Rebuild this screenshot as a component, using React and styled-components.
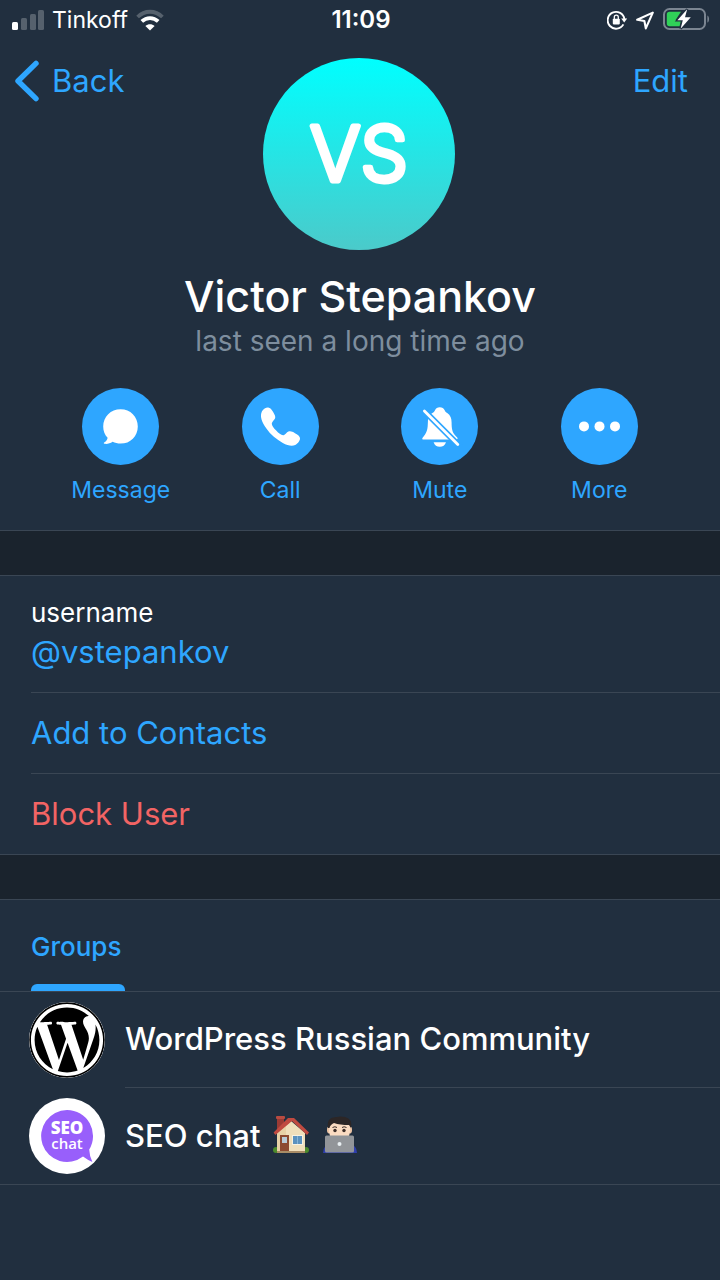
import React from 'react';
import styled, { createGlobalStyle } from 'styled-components';
import { FaWordpress } from 'react-icons/fa';

const GlobalStyle = createGlobalStyle`
  * {
    box-sizing: border-box;
  }

  body {
    margin: 0;
    background-color: #212f3f;
    font-family: Inter, "Liberation Sans", sans-serif;
    color: #fff;
  }

  button {
    font-family: inherit;
    background: none;
    border: none;
    padding: 0;
    cursor: pointer;
  }

  a {
    color: inherit;
    text-decoration: none;
  }

  svg {
    display: block;
    flex: none;
  }
`;

const Page = styled.div`
  min-height: 100vh;
  background-color: #212f3f;
`;

const StatusBar = styled.div`
  display: grid;
  grid-template-columns: 1fr auto 1fr;
  align-items: center;
  height: 40px;
  padding: 0 10px 0 12px;
  font-size: 23px;
  line-height: 28px;
`;

const StatusGroup = styled.div`
  display: flex;
  align-items: center;
  justify-content: ${(props) => (props.$end ? 'flex-end' : 'flex-start')};
  gap: ${(props) => (props.$end ? '9px' : '8px')};
`;

const Clock = styled.time`
  font-size: 24px;
  font-weight: 600;
`;

const Header = styled.header`
  border-bottom: 1px solid #3a4654;
  padding-bottom: 25px;
`;

const NavBar = styled.nav`
  display: grid;
  grid-template-columns: 1fr auto 1fr;
  align-items: start;
  padding: 18px 32px 0 14px;
`;

const NavButton = styled.button`
  display: flex;
  align-items: center;
  gap: 12px;
  justify-self: ${(props) => (props.$end ? 'end' : 'start')};
  color: #2ea6ff;
  font-size: 31px;
  line-height: 46px;
`;

const Avatar = styled.div`
  width: 192px;
  height: 192px;
  margin-left: 16px;
  border-radius: 50%;
  background: linear-gradient(#00ffff, #4bcaca);
  overflow: hidden;
`;

const Name = styled.h1`
  margin: 19px 0 0;
  font-size: 43px;
  line-height: 54px;
  font-weight: 500;
  text-align: center;
`;

const LastSeen = styled.p`
  margin: 0;
  font-size: 28px;
  line-height: 37px;
  text-align: center;
  color: #7e8e9e;
`;

const Actions = styled.div`
  display: grid;
  grid-template-columns: repeat(4, 1fr);
  padding: 28px 41px 0;
`;

const ActionButton = styled.button`
  display: flex;
  flex-direction: column;
  align-items: center;
  gap: 10px;
  color: #2ea6ff;
  font-size: 23px;
  line-height: 30px;
`;

const ActionCircle = styled.span`
  width: 77px;
  height: 77px;
  border-radius: 50%;
  background-color: #2ea6ff;
`;

const Spacer = styled.div`
  height: 44px;
  background-color: #1a232d;
`;

const Section = styled.section`
  border-top: 1px solid #3a4654;
  border-bottom: 1px solid #3a4654;
`;

const InfoRow = styled.div`
  margin-left: 31px;
  padding: 20px 0 18px;
  border-bottom: 1px solid #3a4654;
`;

const InfoLabel = styled.div`
  font-size: 26px;
  line-height: 34px;
`;

const InfoLink = styled.a`
  display: block;
  color: #2ea6ff;
  font-size: 31px;
  line-height: 44px;
`;

const RowButton = styled.button`
  display: block;
  width: calc(100% - 31px);
  margin-left: 31px;
  font-size: 31px;
  line-height: 80px;
  text-align: left;
  color: ${(props) => (props.$danger ? '#f26464' : '#2ea6ff')};
  border-bottom: ${(props) => (props.$danger ? 'none' : '1px solid #3a4654')};
`;

const Tabs = styled.div`
  display: flex;
  padding-left: 31px;
  border-bottom: 1px solid #3a4654;
`;

const Tab = styled.button`
  color: #2ea6ff;
  font-size: 26px;
  font-weight: 500;
  line-height: 34px;
  padding-top: 30px;

  span {
    padding-right: 4px;
  }

  &::after {
    content: '';
    display: block;
    height: 7px;
    margin-top: 20px;
    border-radius: 6px 6px 0 0;
    background-color: #2ea6ff;
  }
`;

const GroupList = styled.ul`
  list-style: none;
  margin: 0;
  padding: 0;
`;

const GroupItem = styled.a`
  display: flex;
  align-items: center;
  gap: 20px;
  padding-left: 29px;
`;

const GroupPicture = styled.span`
  flex: none;
  display: flex;
  align-items: center;
  justify-content: center;
  width: 76px;
  height: 76px;
  border-radius: 50%;
  background-color: #fff;
  color: #000;
  overflow: hidden;
`;

const GroupName = styled.span`
  flex: 1;
  display: flex;
  align-items: center;
  gap: 12px;
  height: 96px;
  padding-bottom: 2px;
  font-size: 31px;
  font-weight: 500;
  border-bottom: ${(props) => (props.$last ? 'none' : '1px solid #3a4654')};
`;

const SignalIcon = () => (
  <svg width="32" height="21" viewBox="0 0 32 21" fill="#56616d">
    <rect x="0" y="12" width="6" height="8" rx="1.5" fill="#fff" />
    <rect x="9" y="8" width="6" height="12" rx="1.5" />
    <rect x="18" y="4" width="6" height="16" rx="1.5" />
    <rect x="26" y="0" width="6" height="20" rx="1.5" />
  </svg>
);

const WifiIcon = () => (
  <svg width="28" height="22" viewBox="0 0 28 22" fill="none" strokeWidth="3.8">
    <path d="M1.6 8C8.6 1 19.4 1 26.4 8" stroke="#56616d" />
    <path d="M5.8 12.4C10.6 8 17.4 8 22.2 12.4" stroke="#fff" />
    <path d="M14 21.4L9.4 17C12 14.6 16 14.6 18.6 17Z" fill="#fff" />
  </svg>
);

const LockIcon = () => (
  <svg width="20" height="20" viewBox="0 0 20 20" fill="none" stroke="#fff">
    <path d="M16.4 14.4A8.4 8.4 0 1 1 17.4 9.2" strokeWidth="1.9" />
    <path d="M14.2 8.6H20.2L17.2 12.6Z" fill="#fff" stroke="none" />
    <rect x="5.8" y="8.8" width="7" height="5.6" rx="0.8" fill="#fff" stroke="none" />
    <path d="M7.3 9V7.2A2 2 0 0 1 11.3 7.2V9" strokeWidth="1.3" />
  </svg>
);

const LocationIcon = () => (
  <svg width="18" height="19" viewBox="0 0 18 19" fill="none" stroke="#fff" strokeWidth="2.1" strokeLinejoin="round">
    <path d="M16.8 1.6L1.2 8.8L8.4 10L9.8 17.4Z" />
  </svg>
);

const BatteryIcon = () => (
  <svg width="47" height="24" viewBox="0 0 47 24">
    <rect x="1" y="1" width="41" height="20" rx="5.5" fill="none" stroke="#7b8591" strokeWidth="2" />
    <path d="M44.4 7.4C46.6 8.4 46.6 13.6 44.4 14.6Z" fill="#7b8591" />
    <path d="M6.5 3.8H18L12.6 12H18L16.6 18.2H6.5Q3.8 18.2 3.8 15.5V6.5Q3.8 3.8 6.5 3.8Z" fill="#30d158" />
    <path d="M24.2 1.2L14.4 12.2H19.8L17.6 20.8L27.8 9.2H22Z" fill="#fff" stroke="#212f3f" strokeWidth="2.4" paintOrder="stroke" />
  </svg>
);

const BackIcon = () => (
  <svg width="26" height="42" viewBox="0 0 26 42" fill="none" stroke="#2ea6ff" strokeWidth="5.4" strokeLinecap="round" strokeLinejoin="round">
    <path d="M22 3.4L4 21L22 38.6" />
  </svg>
);

const Initials = () => (
  <svg width="192" height="192" viewBox="0 0 192 192">
    <text
      x="96"
      y="123"
      textAnchor="middle"
      fontSize="75"
      fontWeight="300"
      fill="#fff"
      stroke="#fff"
      strokeWidth="5"
      strokeLinejoin="round"
    >
      VS
    </text>
  </svg>
);

const MessageIcon = () => (
  <svg width="77" height="77" viewBox="0 0 77 77" fill="#fff">
    <path d="M38.6 21.2C48.4 21.2 55.8 28.6 55.8 38.4C55.8 48.2 48.4 55.6 38.6 55.6C35.6 55.6 33 55 30.6 53.8C28 55.6 25.2 56.2 22.4 55.8C21.6 55.6 21.6 55 22.2 54.6C24.4 53.2 25.4 51.6 25.6 49.8C22.8 46.8 21.2 42.8 21.2 38.4C21.2 28.6 28.8 21.2 38.6 21.2Z" />
  </svg>
);

const CallIcon = () => (
  <svg width="77" height="77" viewBox="0 0 77 77" fill="#fff">
    <path d="M20 23.2C21.4 20.8 24 19.2 26.2 19.4C28.2 19.6 29.6 21.4 31 23.8C32.6 26.6 33.6 28.4 33.2 30C32.8 31.8 30.2 33.4 29.8 35.2C29.6 37.4 31.6 40 34.2 42.6C37 45.6 39.4 47.6 41.6 47.2C43.4 46.8 44.6 44.4 46.4 43.6C48.4 42.8 50.4 43.6 53 45.2C56.2 47 58.2 48.6 58 50.6C58 53 55.6 55.8 53.2 57C50 58.6 45.6 57.6 40.8 55C34.6 51.6 28.6 46.8 24.4 40.6C20 34.2 17.4 28.4 20 23.2Z" />
  </svg>
);

const MuteIcon = () => (
  <svg width="77" height="77" viewBox="0 0 77 77" fill="#fff">
    <path d="M34 22.2C34.8 20.4 36.4 19.2 38.8 19.2C41.2 19.2 42.8 20.4 43.8 22.4C44.2 23.6 45 24.2 46.2 25C49.4 27.2 50.6 30.2 50.6 34.6C50.6 41.2 51.4 44 53.8 47L56.4 49.8C57 50.8 56.2 51.6 55 51.6H22.6C21.2 51.6 20.8 50.4 21.8 49.4C25.4 45.4 26.6 42.4 26.8 36L27 31.8C27.2 28.4 28.6 26.6 31.4 25C32.8 24.2 33.6 23.4 34 22.2Z" />
    <path d="M32.6 54.2H45C44 57.2 41.8 58.8 38.8 58.8C35.8 58.8 33.6 57.2 32.6 54.2Z" />
    <path d="M21 20.6L59 58.6" stroke="#2ea6ff" strokeWidth="6.2" />
    <path d="M23.4 23L56.8 56.4" stroke="#fff" strokeWidth="2.8" strokeLinecap="round" />
  </svg>
);

const MoreIcon = () => (
  <svg width="77" height="77" viewBox="0 0 77 77" fill="#fff">
    <circle cx="23" cy="38.4" r="5" />
    <circle cx="38.5" cy="38.4" r="5" />
    <circle cx="54" cy="38.4" r="5" />
  </svg>
);

const SeoPicture = () => (
  <svg width="76" height="76" viewBox="0 0 76 76" fontFamily='"Open Sans", sans-serif' fill="#fff" textAnchor="middle">
    <path d="M38 12A26 26 0 1 0 54 58.6Q58.4 62 63.4 64Q60.6 59 60.2 51.6A26 26 0 0 0 38 12Z" fill="#985ffb" />
    <text x="38" y="36" fontSize="17" fontWeight="800">SEO</text>
    <text x="38" y="51" fontSize="15" fontWeight="600">chat</text>
  </svg>
);

const HouseEmoji = () => (
  <svg role="img" aria-label="house" width="38" height="38" viewBox="0 0 38 38">
    <circle cx="4" cy="34" r="3" fill="#4c8a2b" />
    <circle cx="34" cy="34" r="3" fill="#4c8a2b" />
    <rect x="5" y="1" width="7" height="12" fill="#9b3a34" />
    <rect x="4" y="0" width="9" height="3" rx="1" fill="#b84b41" />
    <path d="M5 17L19 5L33 17V36H5Z" fill="#f0dfbb" />
    <path d="M5 17L14 9V36H5Z" fill="#e8d2a6" />
    <path d="M16 2H22L37 16.5L35 19L20 5L3.4 19L1.6 16.5Z" fill="#c04a40" />
    <rect x="8" y="19" width="9" height="16" fill="#8c4a30" />
    <rect x="10" y="21" width="5" height="6" fill="#b9cbd6" />
    <rect x="20" y="19" width="11" height="10" fill="#f8f2e2" />
    <rect x="21" y="20" width="9" height="8" fill="#5c92bf" />
    <path d="M25.5 20V28" stroke="#86b4d8" strokeWidth="1" />
    <rect x="5" y="35" width="28" height="2" fill="#a88c66" />
  </svg>
);

const TechnologistEmoji = () => (
  <svg role="img" aria-label="man technologist" width="36" height="38" viewBox="0 0 36 38">
    <path d="M1 37Q1 29 9 28H27Q35 29 35 37Z" fill="#2f3fae" />
    <ellipse cx="7" cy="14" rx="2" ry="3.4" fill="#ecc5a6" />
    <ellipse cx="28" cy="14" rx="2" ry="3.4" fill="#ecc5a6" />
    <path d="M7 9Q8 3 17.5 3Q27 3 28 9V16Q27 25 17.5 26Q8 25 7 16Z" fill="#fbdcc2" />
    <path d="M6 12Q4 1 15 1Q18 0 23 1Q31 3 29 12L27 9Q18 9 12 7Q8 9 7.5 12Z" fill="#2c2626" />
    <path d="M10.5 11.5Q13 10 15 11.5M20 11.5Q22 10 24.5 11.5" fill="none" stroke="#3c2d27" strokeWidth="1" />
    <circle cx="13" cy="14.5" r="1.7" fill="#3c2d27" />
    <circle cx="22" cy="14.5" r="1.7" fill="#3c2d27" />
    <rect x="3" y="19.5" width="29" height="17" rx="1.5" fill="#929599" />
    <circle cx="17.5" cy="28" r="2" fill="#e9eff2" />
  </svg>
);

const actions = [
  { label: 'Message', icon: <MessageIcon /> },
  { label: 'Call', icon: <CallIcon /> },
  { label: 'Mute', icon: <MuteIcon /> },
  { label: 'More', icon: <MoreIcon /> },
];

const App = () => {
  return (
    <Page>
      <GlobalStyle />
      <StatusBar>
        <StatusGroup>
          <SignalIcon />
          <span>Tinkoff</span>
          <WifiIcon />
        </StatusGroup>
        <Clock>11:09</Clock>
        <StatusGroup $end>
          <LockIcon />
          <LocationIcon />
          <BatteryIcon />
        </StatusGroup>
      </StatusBar>

      <Header>
        <NavBar>
          <NavButton type="button">
            <BackIcon />
            Back
          </NavButton>
          <Avatar>
            <Initials />
          </Avatar>
          <NavButton type="button" $end>Edit</NavButton>
        </NavBar>
        <Name>Victor Stepankov</Name>
        <LastSeen>last seen a long time ago</LastSeen>
        <Actions>
          {actions.map((action) => (
            <ActionButton type="button" key={action.label}>
              <ActionCircle>{action.icon}</ActionCircle>
              {action.label}
            </ActionButton>
          ))}
        </Actions>
      </Header>

      <Spacer />

      <Section>
        <InfoRow>
          <InfoLabel>username</InfoLabel>
          <InfoLink href="#vstepankov">@vstepankov</InfoLink>
        </InfoRow>
        <RowButton type="button">Add to Contacts</RowButton>
        <RowButton type="button" $danger>Block User</RowButton>
      </Section>

      <Spacer />

      <Section>
        <Tabs role="tablist">
          <Tab type="button" role="tab" aria-selected="true">
            <span>Groups</span>
          </Tab>
        </Tabs>
        <GroupList>
          <li>
            <GroupItem href="#wordpress">
              <GroupPicture>
                <FaWordpress size={78} />
              </GroupPicture>
              <GroupName>WordPress Russian Community</GroupName>
            </GroupItem>
          </li>
          <li>
            <GroupItem href="#seo">
              <GroupPicture>
                <SeoPicture />
              </GroupPicture>
              <GroupName $last>
                SEO chat
                <HouseEmoji />
                <TechnologistEmoji />
              </GroupName>
            </GroupItem>
          </li>
        </GroupList>
      </Section>
    </Page>
  );
};

export default App;
